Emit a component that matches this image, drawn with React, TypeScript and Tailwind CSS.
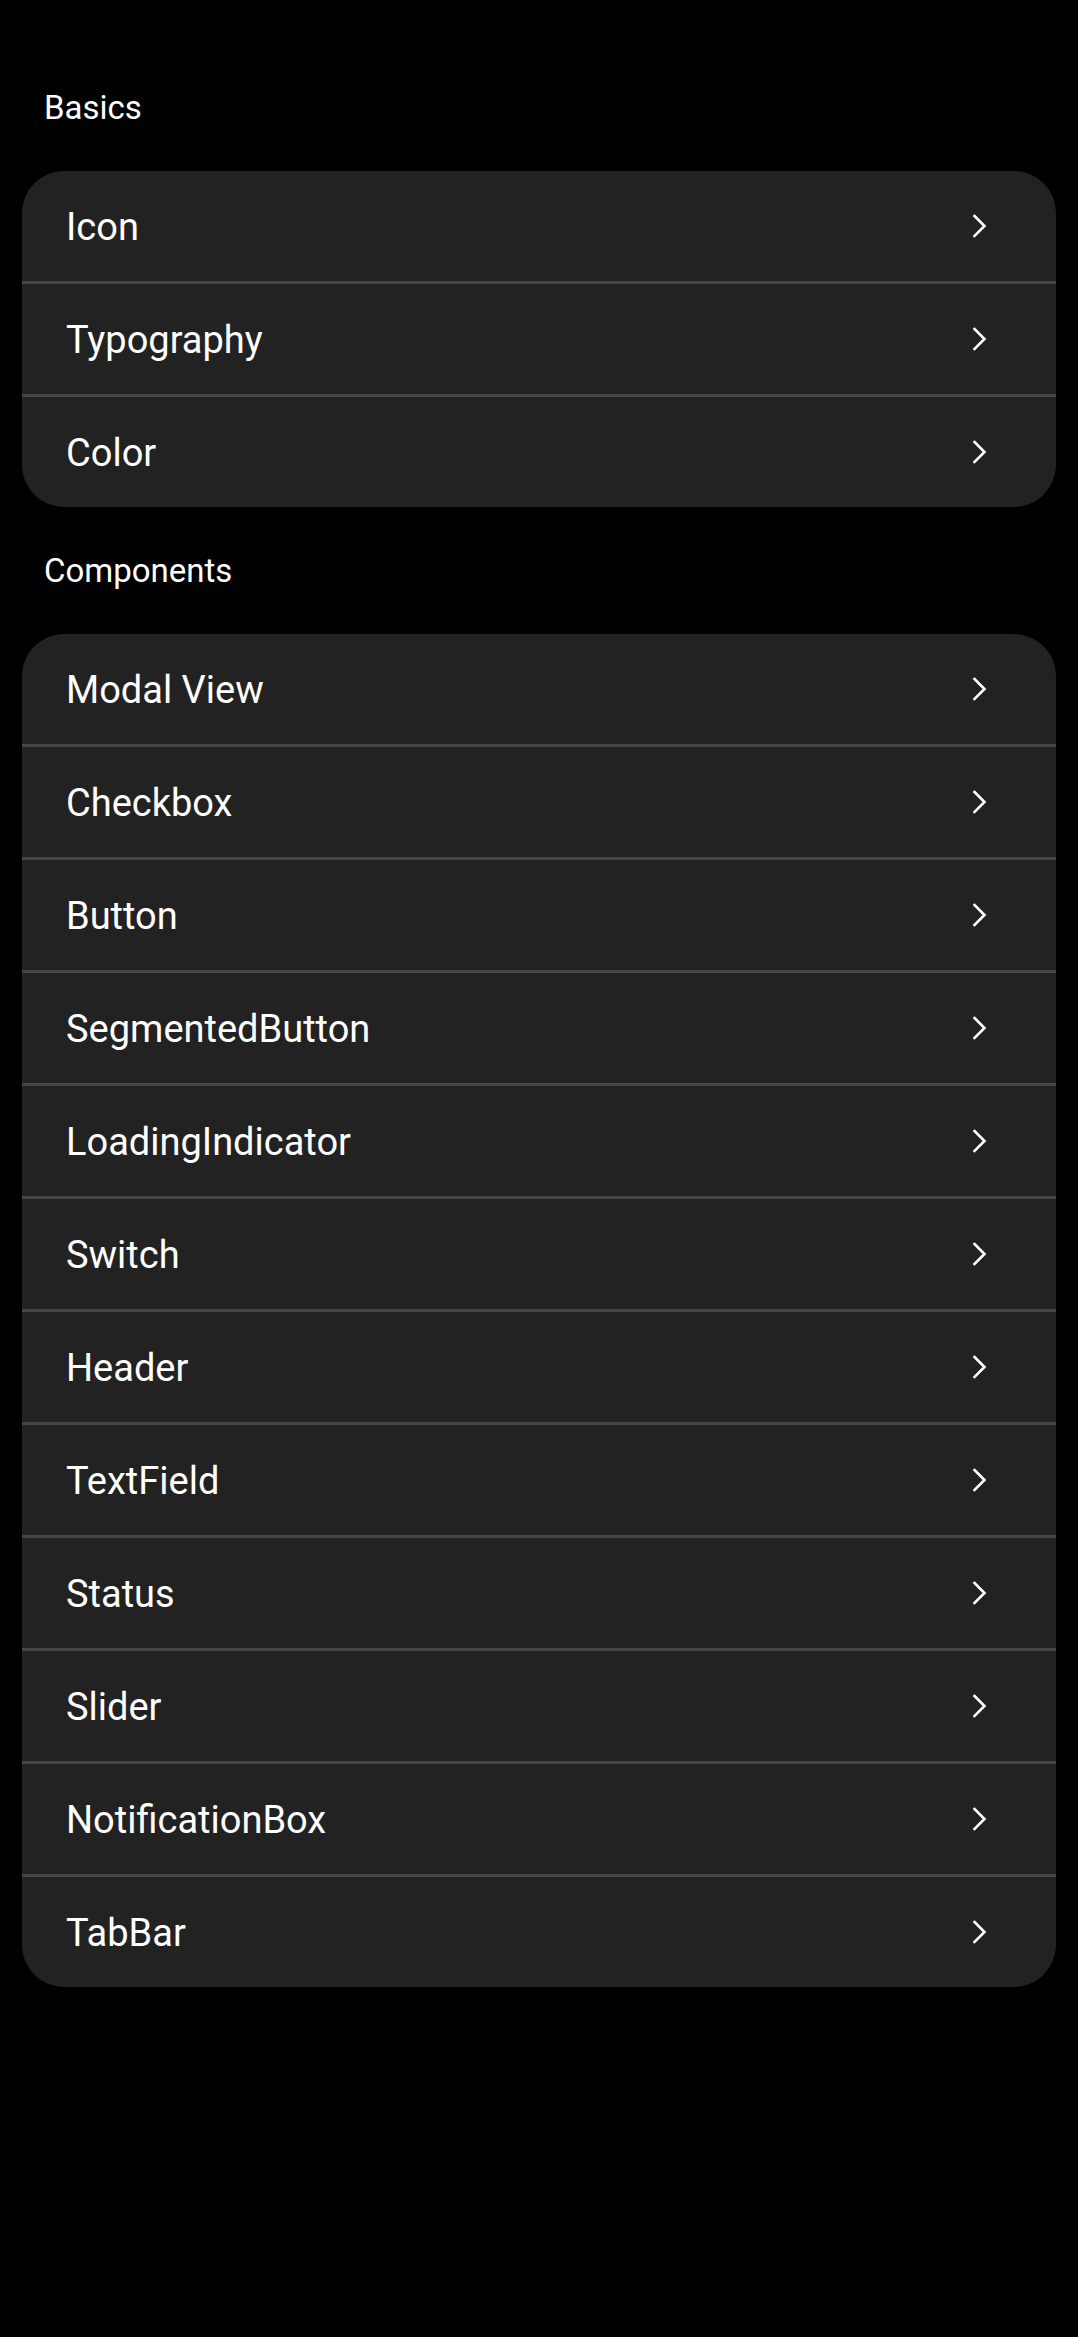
import React from "react";

const basics = ["Icon", "Typography", "Color"];
const components = [
  "Modal View",
  "Checkbox",
  "Button",
  "SegmentedButton",
  "LoadingIndicator",
  "Switch",
  "Header",
  "TextField",
  "Status",
  "Slider",
  "NotificationBox",
  "TabBar",
];

const Chevron = () => (
  <svg width="15" height="24" viewBox="0 0 15 24" fill="none">
    <polyline
      points="2.5,2 12.5,12 2.5,22"
      stroke="white"
      strokeWidth="2.6"
      strokeLinecap="square"
      strokeLinejoin="miter"
    />
  </svg>
);

const SectionLabel = ({ title }: { title: string }) => (
  <div className="h-[127px] flex items-center pl-[22px] text-[33px] text-white">
    {title}
  </div>
);

const Card = ({ items }: { items: string[] }) => (
  <div className="w-full bg-[#222222] rounded-[42px] overflow-hidden flex flex-col">
    {items.map((item, i) => (
      <React.Fragment key={item}>
        {i > 0 && <div className="h-[3px] w-full bg-[#46454d]" />}
        <div className="h-[110px] flex flex-row items-center justify-between pl-[44px] pr-[69px] cursor-pointer">
          <span className="text-[38px] text-white pt-[2px]">{item}</span>
          <Chevron />
        </div>
      </React.Fragment>
    ))}
  </div>
);

const App = () => {
  return (
    <div
      className="w-full min-h-[2337px] bg-black pt-[44px] px-[22px]"
      style={{ fontFamily: "Roboto, 'Noto Sans', sans-serif" }}
    >
      <SectionLabel title="Basics" />
      <Card items={basics} />
      <SectionLabel title="Components" />
      <Card items={components} />
    </div>
  );
};

export default App;
